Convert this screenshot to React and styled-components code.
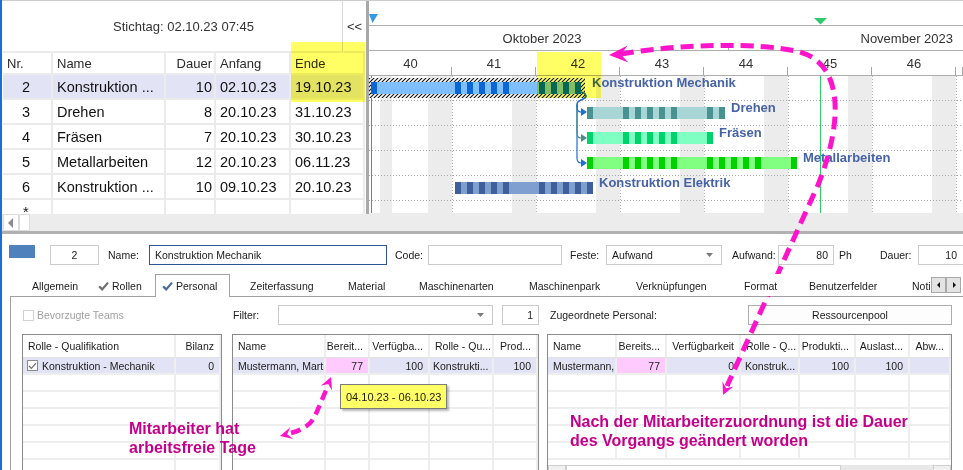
import React from 'react'
import styled, { createGlobalStyle } from 'styled-components'

const FONT = '"Liberation Sans", Arial, sans-serif'
const PINK = '#ff14cc'

const GlobalStyle = createGlobalStyle`
  * { box-sizing: border-box; }
  html, body { margin: 0; padding: 0; background: #ffffff; }
  body { font-family: ${FONT}; color: #1b1b1b; }
`

const range = (a, b) => Array.from({ length: b - a + 1 }, (_, i) => a + i)

const tasks = [
  { nr: 2, name: 'Konstruktion ...', dauer: 10, anfang: '02.10.23', ende: '19.10.23', sel: true },
  { nr: 3, name: 'Drehen', dauer: 8, anfang: '20.10.23', ende: '31.10.23' },
  { nr: 4, name: 'Fräsen', dauer: 7, anfang: '20.10.23', ende: '30.10.23' },
  { nr: 5, name: 'Metallarbeiten', dauer: 12, anfang: '20.10.23', ende: '06.11.23' },
  { nr: 6, name: 'Konstruktion ...', dauer: 10, anfang: '09.10.23', ende: '20.10.23' },
]

// day 0 = Mo 02.10.23, one day = 12px, page x of day 0 = 368
const X0 = 368
const DAY = 12
const dayX = (d) => X0 + d * DAY
const ROW_TOP = [75, 100, 125, 150, 175]

const bars = [
  { label: 'Konstruktion Mechanik', from: 0, to: 17, work: [0, ...range(7, 11), ...range(14, 17)], light: '#80bfff', dark: '#0a67d4' },
  { label: 'Drehen', from: 18, to: 29, work: [18, ...range(21, 25), 28, 29], light: '#a8d5d5', dark: '#4a9292' },
  { label: 'Fräsen', from: 18, to: 28, work: [18, ...range(21, 25), 28], light: '#80ffc2', dark: '#00d26c' },
  { label: 'Metallarbeiten', from: 18, to: 35, work: [18, ...range(21, 25), ...range(28, 32), 35], light: '#80ff80', dark: '#00d200' },
  { label: 'Konstruktion Elektrik', from: 7, to: 18, work: [...range(7, 11), ...range(14, 18)], light: '#7f9fd0', dark: '#3f5f9a' },
]

const offDays = range(0, 49).filter((d) => d % 7 >= 5 || d === 1)
const weeks = [
  { n: 40, w: 83 }, { n: 41, w: 84 }, { n: 42, w: 84 }, { n: 43, w: 84 },
  { n: 44, w: 84 }, { n: 45, w: 84 }, { n: 46, w: 84 }, { n: '', w: 7 },
]
const deps = [
  { y: 163, color: '#1d6fd6' },
  { y: 138, color: '#4a8f86' },
  { y: 112, color: '#1d6fd6' },
]

const tabs = [
  { label: 'Allgemein', w: 79, pl: 19 },
  { label: 'Rollen', w: 64, pl: 6, check: '#707070' },
  { label: 'Personal', w: 75, pl: 6, check: '#4a6a9c', active: true },
  { label: 'Zeiterfassung', w: 100, pl: 19 },
  { label: 'Material', w: 70, pl: 17 },
  { label: 'Maschinenarten', w: 110, pl: 18 },
  { label: 'Maschinenpark', w: 107, pl: 18 },
  { label: 'Verknüpfungen', w: 108, pl: 18 },
  { label: 'Format', w: 66, pl: 18 },
  { label: 'Benutzerfelder', w: 110, pl: 17 },
  { label: 'Noti:', w: 30, pl: 10 },
]

const g1Cols = '153px 45px'
const g2Cols = '93px 44px 60px 64px 44px'
const g3Cols = '69px 50px 74px 59px 56px 54px 41px'

const arrowHead = (tx, ty, dx, dy, len, half) => {
  const m = Math.hypot(dx, dy)
  const ux = dx / m
  const uy = dy / m
  const bx = tx - ux * len
  const by = ty - uy * len
  const nx = tx - ux * len * 0.62
  const ny = ty - uy * len * 0.62
  return [
    [tx, ty],
    [bx - uy * half, by + ux * half],
    [nx, ny],
    [bx + uy * half, by - ux * half],
  ].map((p) => p.map((v) => v.toFixed(1)).join(',')).join(' ')
}

/* ---------- frame ---------- */

const Root = styled.div`
  position: relative;
  width: 963px;
  height: 470px;
  overflow: hidden;
  font-family: ${FONT};
`
const Frame = styled.div`
  width: 100%;
  height: 100%;
  border-left: 2px solid #1a6fd4;
  display: flex;
  flex-direction: column;
  background: #fff;
`
const Top = styled.div`
  display: flex;
  height: 231px;
  flex-shrink: 0;
  border-top: 1px solid #cdcdcd;
  background: #ececec;
`

/* ---------- left table ---------- */

const LeftPane = styled.div`
  width: 364px;
  display: flex;
  flex-direction: column;
  background: #fff;
`
const DateBar = styled.div`
  height: 50px;
  display: flex;
`
const DateLabel = styled.div`
  flex: 1;
  display: flex;
  align-items: center;
  padding-left: 111px;
  font-size: 13px;
  color: #333;
`
const CollapseBtn = styled.div`
  width: 24px;
  border-left: 1px solid #d9d9d9;
  display: flex;
  align-items: center;
  justify-content: center;
  font-size: 13px;
  color: #333;
`
const TableWrap = styled.div`
  margin-left: 1px;
  width: 362px;
`
const TRow = styled.div`
  display: grid;
  grid-template-columns: 50px 113px 50px 75px 74px;
  height: ${(p) => p.$h}px;
  border-top: ${(p) => (p.$head ? '2px solid #ebebeb' : 'none')};
  border-bottom: ${(p) => (p.$open ? 'none' : '2px solid #ebebeb')};
  background: ${(p) => (p.$sel ? '#e3e3f6' : '#fff')};
  font-size: ${(p) => (p.$head ? 13 : 14.5)}px;
  color: ${(p) => (p.$head ? '#2a2a2a' : '#111')};
  overflow: hidden;
`
const TCell = styled.div`
  display: flex;
  align-items: ${(p) => (p.$top ? 'flex-start' : 'center')};
  justify-content: ${(p) => (p.$right ? 'flex-end' : 'flex-start')};
  padding: ${(p) => (p.$top ? 4 : 0)}px ${(p) => p.$pr ?? 0}px 0 ${(p) => p.$pl ?? 4}px;
  border-right: 2px solid #ebebeb;
  white-space: nowrap;
  overflow: hidden;
`
const HScroll = styled.div`
  height: 17px;
  background: #ececec;
  display: flex;
  padding-left: 1px;
`
const ScrollBtn = styled.div`
  width: ${(p) => p.$w}px;
  height: 17px;
  background: #fff;
  border: 1px solid #dcdcdc;
  display: flex;
  align-items: center;
  justify-content: center;
`
const Splitter = styled.div`
  width: 3px;
  height: 213px;
  background: #a9a9a9;
  flex-shrink: 0;
`

/* ---------- gantt ---------- */

const GanttPane = styled.div`
  flex: 1;
  min-width: 0;
  display: flex;
  flex-direction: column;
  background: #fff;
`
const HeadRow = styled.div`
  height: 25px;
  flex-shrink: 0;
  display: flex;
  position: relative;
  border-bottom: 1px solid #adadad;
  font-size: 13px;
  color: #333;
`
const Marker = styled.svg`
  position: absolute;
  left: ${(p) => p.$x}px;
  top: ${(p) => p.$y}px;
`
const MonthCell = styled.div`
  position: relative;
  width: ${(p) => (p.$w ? `${p.$w}px` : 'auto')};
  flex: ${(p) => (p.$w ? 'none' : 1)};
  display: flex;
  align-items: center;
  justify-content: ${(p) => (p.$end ? 'flex-end' : 'center')};
  padding-right: ${(p) => p.$pr}px;
  &::before {
    content: '';
    display: ${(p) => (p.$tick ? 'block' : 'none')};
    position: absolute;
    left: 0;
    bottom: 0;
    width: 1px;
    height: 7px;
    background: #a8a8a8;
  }
`
const WeekCell = styled.div`
  position: relative;
  width: ${(p) => p.$w}px;
  flex-shrink: 0;
  display: flex;
  align-items: center;
  justify-content: center;
  &::after {
    content: '';
    position: absolute;
    right: 0;
    bottom: 0;
    width: 1px;
    height: 8px;
    background: #a8a8a8;
  }
`
const ChartSvg = styled.svg`
  display: block;
  flex-shrink: 0;
`
const GanttScroll = styled.div`
  flex: 1;
  background: #ececec;
`

/* ---------- bottom form ---------- */

const Bottom = styled.div`
  flex: 1;
  min-height: 0;
  border-top: 3px solid #b1b1b1;
  display: flex;
  flex-direction: column;
  background: #fff;
  font-size: 10.5px;
`
const FieldRow = styled.div`
  display: flex;
  align-items: center;
  height: 20px;
  margin-top: 11px;
  flex-shrink: 0;
`
const Swatch = styled.div`
  width: 26px;
  height: 13px;
  margin-left: 7px;
  align-self: flex-start;
  background: #4f81bd;
  flex-shrink: 0;
`
const Label = styled.span`
  width: ${(p) => p.$w}px;
  margin-left: ${(p) => p.$ml || 0}px;
  flex-shrink: 0;
  white-space: nowrap;
  color: ${(p) => (p.$muted ? '#a0a0a0' : '#1b1b1b')};
`
const Field = styled.div`
  width: ${(p) => p.$w}px;
  margin-left: ${(p) => p.$ml || 0}px;
  height: 20px;
  flex-shrink: 0;
  border: 1px solid ${(p) => (p.$focus ? '#2f5597' : '#cbcbcb')};
  background: #fff;
  display: flex;
  align-items: center;
  justify-content: ${(p) => (p.$align === 'right' ? 'flex-end' : p.$align === 'center' ? 'center' : 'space-between')};
  padding: 0 ${(p) => p.$pr ?? 5}px 0 5px;
  white-space: nowrap;
  overflow: hidden;
  color: #1b1b1b;
`
const TabStrip = styled.div`
  display: flex;
  height: 22px;
  margin-top: 9px;
  margin-left: 10px;
  flex-shrink: 0;
  position: relative;
  z-index: 1;
`
const Tab = styled.div`
  width: ${(p) => p.$w}px;
  flex-shrink: 0;
  height: ${(p) => (p.$active ? 23 : 22)}px;
  padding-left: ${(p) => p.$pl}px;
  display: flex;
  align-items: center;
  gap: 3px;
  white-space: nowrap;
  overflow: hidden;
  background: #fff;
  border: 1px solid ${(p) => (p.$active ? '#a0a0a0' : 'transparent')};
  border-bottom: none;
  color: #1b1b1b;
`
const TabArrows = styled.div`
  display: flex;
  margin-top: 3px;
  height: 16px;
`
const ArrowBtn = styled.div`
  width: 15px;
  height: 16px;
  background: #e3e3e3;
  border: 1px solid #a8a8a8;
  display: flex;
  align-items: center;
  justify-content: center;
`
const Panel = styled.div`
  flex: 1;
  margin-left: 8px;
  border-top: 1px solid #a0a0a0;
  border-left: 1px solid #a0a0a0;
  display: flex;
  flex-direction: column;
`
const ToolRow = styled.div`
  display: flex;
  align-items: center;
  height: 20px;
  margin-top: 8px;
  flex-shrink: 0;
`
const CheckBox = styled.div`
  width: 11px;
  height: 11px;
  margin-left: ${(p) => p.$ml || 0}px;
  border: 1px solid ${(p) => (p.$disabled ? '#d2d2d2' : '#8a8a8a')};
  background: #fff;
  flex-shrink: 0;
  display: flex;
  align-items: center;
  justify-content: center;
`
const PoolButton = styled.div`
  width: 204px;
  height: 20px;
  border: 1px solid #adadad;
  background: #fdfdfd;
  display: flex;
  align-items: center;
  justify-content: center;
  flex-shrink: 0;
`
const GridsRow = styled.div`
  display: flex;
  margin-top: 9px;
`
const DGrid = styled.div`
  width: ${(p) => p.$w}px;
  margin-left: ${(p) => p.$ml}px;
  height: 149px;
  flex-shrink: 0;
  border: 1px solid #8a8a8a;
  display: flex;
  flex-direction: column;
  overflow: hidden;
  background: #fff;
`
const DBody = styled.div`
  flex: 1;
  min-height: 0;
  overflow: hidden;
`
const DRow = styled.div`
  display: grid;
  grid-template-columns: ${(p) => p.$cols};
  height: ${(p) => (p.$head ? 23 : 17)}px;
  border-bottom: ${(p) => (p.$head ? '1px solid #e2e2e2' : '2px solid #eeeeee')};
  background: ${(p) => (p.$sel ? '#e3e3f6' : '#fff')};
`
const DCell = styled.div`
  display: flex;
  align-items: center;
  gap: 4px;
  justify-content: ${(p) => (p.$right ? 'flex-end' : 'flex-start')};
  padding: 0 ${(p) => (p.$right ? 5 : 2)}px 0 ${(p) => p.$pl ?? 5}px;
  border-right: 2px solid #eeeeee;
  background: ${(p) => p.$bg || 'transparent'};
  white-space: nowrap;
  overflow: hidden;
`
const GridScroll = styled.div`
  height: 17px;
  flex-shrink: 0;
  display: flex;
  background: #e8e8e8;
`
const GridThumb = styled.div`
  width: ${(p) => p.$w}px;
  height: 17px;
  background: ${(p) => p.$bg};
  border: 1px solid #cfcfcf;
  display: flex;
  align-items: center;
  justify-content: center;
`
const ScrollTrack = styled.div`
  flex: 1;
`

/* ---------- overlays ---------- */

const Highlight = styled.div`
  position: absolute;
  left: ${(p) => p.$x}px;
  top: ${(p) => p.$y}px;
  width: ${(p) => p.$w}px;
  height: ${(p) => p.$h}px;
  background: rgb(255, 255, 100);
  mix-blend-mode: multiply;
  pointer-events: none;
`
const Tooltip = styled.div`
  position: absolute;
  left: 340px;
  top: 384px;
  width: 107px;
  height: 25px;
  background: #ffff66;
  border: 1px solid #7a7a7a;
  box-shadow: 2px 2px 2px rgba(0, 0, 0, 0.28);
  display: flex;
  align-items: center;
  padding-left: 5px;
  font-size: 11px;
  color: #1b1b1b;
  white-space: nowrap;
`
const Note = styled.div`
  position: absolute;
  left: ${(p) => p.$x}px;
  top: ${(p) => p.$y}px;
  font-weight: bold;
  font-size: 16px;
  line-height: 19px;
  color: #c4008a;
  white-space: nowrap;
`
const ArrowLayer = styled.svg`
  position: absolute;
  left: 0;
  top: 0;
  pointer-events: none;
`

const Check = ({ color }) => (
  <svg width="11" height="10" viewBox="0 0 11 10">
    <path d="M1.2 5.4 L4.2 8.4 L10 1.6" fill="none" stroke={color} strokeWidth="2.2" />
  </svg>
)
const Caret = () => (
  <svg width="7" height="4" viewBox="0 0 7 4">
    <path d="M0 0 H7 L3.5 4 Z" fill="#7a7a7a" />
  </svg>
)
const Tri = ({ dir, color = '#111', s = 4 }) => (
  <svg width={s + 1} height={s * 2} viewBox={`0 0 ${s + 1} ${s * 2}`}>
    <path d={dir === 'left' ? `M${s} 0 V${s * 2} L0 ${s} Z` : `M1 0 V${s * 2} L${s + 1} ${s} Z`} fill={color} />
  </svg>
)

function GanttBody() {
  return (
    <ChartSvg width="594" height="137" viewBox="369 76 594 137">
      <defs>
        <pattern id="hatch" width="4" height="4" patternUnits="userSpaceOnUse">
          <rect width="4" height="4" fill="#fff" />
          <path d="M-1 1 L1 -1 M0 4 L4 0 M3 5 L5 3" stroke="#111" strokeWidth="1.1" />
        </pattern>
      </defs>
      {offDays.map((d) => (
        <rect key={d} x={dayX(d)} y="76" width={DAY} height="137" fill="#ececec" />
      ))}
      {[100, 125, 150, 175, 200].map((y) => (
        <line key={y} x1="369" x2="963" y1={y + 0.5} y2={y + 0.5} stroke="#a9a9a9" strokeDasharray="1 2" />
      ))}
      {range(1, 7).map((w) => (
        <line key={w} x1={dayX(w * 7) + 0.5} x2={dayX(w * 7) + 0.5} y1="76" y2="213" stroke="#b0b0b0" strokeDasharray="1 2" />
      ))}
      <line x1="371.5" x2="371.5" y1="76" y2="213" stroke="#3b8fe0" />
      <line x1="820.5" x2="820.5" y1="76" y2="213" stroke="#2fcc66" />
      <rect x="369" y="78" width="216" height="20" fill="url(#hatch)" />
      {bars.map((b, i) => {
        const top = ROW_TOP[i] + 7
        const x0 = dayX(b.from) + 3
        const x1 = dayX(b.to) + 9
        return (
          <g key={b.label}>
            <rect x={x0} y={top} width={x1 - x0} height="12" fill={b.light} />
            {b.work.map((d) => (
              <rect key={d} x={dayX(d) + 3} y={top} width="6" height="12" fill={b.dark} />
            ))}
          </g>
        )
      })}
      {deps.map((d) => (
        <g key={d.y}>
          <path
            d={`M581 92 C586 93 588 97 583 99 L579 101 Q577 102 577 105 L577 ${d.y - 5} Q577 ${d.y} 581 ${d.y}`}
            fill="none"
            stroke={d.color}
            strokeWidth="1.2"
          />
          <path d={`M581 ${d.y - 4} L587 ${d.y} L581 ${d.y + 4} Z`} fill={d.color} />
        </g>
      ))}
      {bars.map((b, i) => (
        <text
          key={b.label}
          x={dayX(b.to) + (i === 0 ? 20 : 15)}
          y={ROW_TOP[i] + 12}
          fontFamily={FONT}
          fontWeight="bold"
          fontSize="13"
          fill="#4663a6"
        >
          {b.label}
        </text>
      ))}
    </ChartSvg>
  )
}

export default function App() {
  return (
    <Root>
      <GlobalStyle />
      <Frame>
        <Top>
          <LeftPane>
            <DateBar>
              <DateLabel>Stichtag: 02.10.23 07:45</DateLabel>
              <CollapseBtn>&lt;&lt;</CollapseBtn>
            </DateBar>
            <TableWrap>
              <TRow $h={24} $head>
                <TCell>Nr.</TCell>
                <TCell>Name</TCell>
                <TCell $right $pr={2}>Dauer</TCell>
                <TCell>Anfang</TCell>
                <TCell>Ende</TCell>
              </TRow>
              {tasks.map((t) => (
                <TRow key={t.nr} $h={25} $sel={t.sel}>
                  <TCell $pl={19}>{t.nr}</TCell>
                  <TCell>{t.name}</TCell>
                  <TCell $right $pr={2}>{t.dauer}</TCell>
                  <TCell>{t.anfang}</TCell>
                  <TCell>{t.ende}</TCell>
                </TRow>
              ))}
              <TRow $h={14} $open>
                <TCell $pl={20} $top>*</TCell>
                <TCell />
                <TCell />
                <TCell />
                <TCell />
              </TRow>
            </TableWrap>
            <HScroll>
              <ScrollBtn $w={16}>
                <Tri dir="left" color="#8a8a8a" s={5} />
              </ScrollBtn>
              <ScrollBtn $w={11} />
            </HScroll>
          </LeftPane>
          <Splitter />
          <GanttPane>
            <HeadRow>
              <Marker $x={0} $y={13} width="10" height="10" viewBox="0 0 10 10">
                <path d="M0 0 H9 L3.5 9 Z" fill="#3a97e2" />
              </Marker>
              <Marker $x={445} $y={17} width="14" height="7" viewBox="0 0 14 7">
                <path d="M0 0 H13 L6.5 6.5 Z" fill="#2ecc6e" />
              </Marker>
            </HeadRow>
            <HeadRow>
              <MonthCell $w={359} $pr={13}>Oktober 2023</MonthCell>
              <MonthCell $tick $end $pr={10}>November 2023</MonthCell>
            </HeadRow>
            <HeadRow>
              {weeks.map((w, i) => (
                <WeekCell key={i} $w={w.w}>{w.n}</WeekCell>
              ))}
            </HeadRow>
            <GanttBody />
            <GanttScroll />
          </GanttPane>
        </Top>

        <Bottom>
          <FieldRow>
            <Swatch />
            <Field $w={49} $ml={15} $align="center">2</Field>
            <Label $w={41} $ml={9}>Name:</Label>
            <Field $w={238} $focus>Konstruktion Mechanik</Field>
            <Label $w={33} $ml={8}>Code:</Label>
            <Field $w={134} />
            <Label $w={36} $ml={8}>Feste:</Label>
            <Field $w={116} $pr={8}>
              <span>Aufwand</span>
              <Caret />
            </Field>
            <Label $w={46} $ml={10}>Aufwand:</Label>
            <Field $w={56} $align="right">80</Field>
            <Label $w={41} $ml={5}>Ph</Label>
            <Label $w={38}>Dauer:</Label>
            <Field $w={46} $align="right" $pr={6}>10</Field>
          </FieldRow>

          <TabStrip>
            {tabs.map((t) => (
              <Tab key={t.label} $w={t.w} $pl={t.pl} $active={t.active}>
                {t.check && <Check color={t.check} />}
                {t.label}
              </Tab>
            ))}
            <TabArrows>
              <ArrowBtn>
                <Tri dir="left" s={3} />
              </ArrowBtn>
              <ArrowBtn>
                <Tri dir="right" s={3} />
              </ArrowBtn>
            </TabArrows>
          </TabStrip>

          <Panel>
            <ToolRow>
              <CheckBox $ml={12} $disabled />
              <Label $w={196} $ml={3} $muted>Bevorzugte Teams</Label>
              <Label $w={45}>Filter:</Label>
              <Field $w={215} $pr={8}>
                <span />
                <Caret />
              </Field>
              <Field $w={37} $ml={9} $align="right">1</Field>
              <Label $w={198} $ml={11}>Zugeordnete Personal:</Label>
              <PoolButton>Ressourcenpool</PoolButton>
            </ToolRow>

            <GridsRow>
              <DGrid $w={200} $ml={11}>
                <DRow $cols={g1Cols} $head>
                  <DCell>Rolle - Qualifikation</DCell>
                  <DCell $right>Bilanz</DCell>
                </DRow>
                <DBody>
                  <DRow $cols={g1Cols} $sel>
                    <DCell $pl={4}>
                      <CheckBox>
                        <svg width="9" height="8" viewBox="0 0 9 8">
                          <path d="M1 4 L3.4 6.4 L8 1.2" fill="none" stroke="#6d6d6d" strokeWidth="1.2" />
                        </svg>
                      </CheckBox>
                      Konstruktion - Mechanik
                    </DCell>
                    <DCell $right>0</DCell>
                  </DRow>
                  {range(1, 6).map((r) => (
                    <DRow key={r} $cols={g1Cols}>
                      <DCell />
                      <DCell />
                    </DRow>
                  ))}
                </DBody>
              </DGrid>

              <DGrid $w={307} $ml={10}>
                <DRow $cols={g2Cols} $head>
                  <DCell>Name</DCell>
                  <DCell $right>Bereit...</DCell>
                  <DCell $right>Verfügba...</DCell>
                  <DCell>Rolle - Qu...</DCell>
                  <DCell $right>Prod...</DCell>
                </DRow>
                <DBody>
                  <DRow $cols={g2Cols} $sel>
                    <DCell>Mustermann, Martin</DCell>
                    <DCell $right $bg="#ffcbff">77</DCell>
                    <DCell $right>100</DCell>
                    <DCell $pl={3}>Konstrukti...</DCell>
                    <DCell $right>100</DCell>
                  </DRow>
                  {range(1, 6).map((r) => (
                    <DRow key={r} $cols={g2Cols}>
                      <DCell />
                      <DCell />
                      <DCell />
                      <DCell />
                      <DCell />
                    </DRow>
                  ))}
                </DBody>
              </DGrid>

              <DGrid $w={405} $ml={8}>
                <DRow $cols={g3Cols} $head>
                  <DCell>Name</DCell>
                  <DCell $right>Bereits...</DCell>
                  <DCell $right>Verfügbarkeit</DCell>
                  <DCell>Rolle - Q...</DCell>
                  <DCell $right>Produkti...</DCell>
                  <DCell $right>Auslast...</DCell>
                  <DCell $right>Abw...</DCell>
                </DRow>
                <DBody>
                  <DRow $cols={g3Cols} $sel>
                    <DCell>Mustermann,</DCell>
                    <DCell $right $bg="#ffcbff">77</DCell>
                    <DCell $right>0</DCell>
                    <DCell $pl={4}>Konstruk...</DCell>
                    <DCell $right>100</DCell>
                    <DCell $right>100</DCell>
                    <DCell />
                  </DRow>
                  {range(1, 5).map((r) => (
                    <DRow key={r} $cols={g3Cols}>
                      {range(1, 7).map((c) => (
                        <DCell key={c} />
                      ))}
                    </DRow>
                  ))}
                </DBody>
                <GridScroll>
                  <GridThumb $w={18} $bg="#f0f0f0">
                    <Tri dir="left" color="#9a9a9a" s={3} />
                  </GridThumb>
                  <GridThumb $w={275} $bg="#fff" />
                  <ScrollTrack />
                  <GridThumb $w={18} $bg="#f0f0f0">
                    <Tri dir="right" color="#9a9a9a" s={3} />
                  </GridThumb>
                </GridScroll>
              </DGrid>
            </GridsRow>
          </Panel>
        </Bottom>
      </Frame>

      <Highlight $x={291} $y={42} $w={74} $h={60} />
      <Highlight $x={537} $y={52} $w={64} $h={46} />

      <Tooltip>04.10.23 - 06.10.23</Tooltip>

      <Note $x={129} $y={419}>
        Mitarbeiter hat
        <br />
        arbeitsfreie Tage
      </Note>
      <Note $x={570} $y={412}>
        Nach der Mitarbeiterzuordnung ist die Dauer
        <br />
        des Vorgangs geändert worden
      </Note>

      <ArrowLayer width="963" height="470" viewBox="0 0 963 470">
        <path
          d="M621 54 C680 44 760 42 800 52 C845 65 842 125 818 185 L727 386"
          fill="none"
          stroke={PINK}
          strokeWidth="5"
          strokeDasharray="13 7"
        />
        <polygon points={arrowHead(609, 55, -1, 0.05, 19, 8.5)} fill={PINK} />
        <polygon points={arrowHead(723, 395, -0.41, 0.91, 12, 6)} fill={PINK} />
        <path
          d="M291 433 C302 430 311 425 315 416 L327 388"
          fill="none"
          stroke={PINK}
          strokeWidth="4.5"
          strokeDasharray="10 6"
        />
        <polygon points={arrowHead(331, 377, 0.38, -0.92, 12, 6)} fill={PINK} />
        <polygon points={arrowHead(280, 436, -1, 0.25, 12, 6)} fill={PINK} />
      </ArrowLayer>
    </Root>
  )
}
